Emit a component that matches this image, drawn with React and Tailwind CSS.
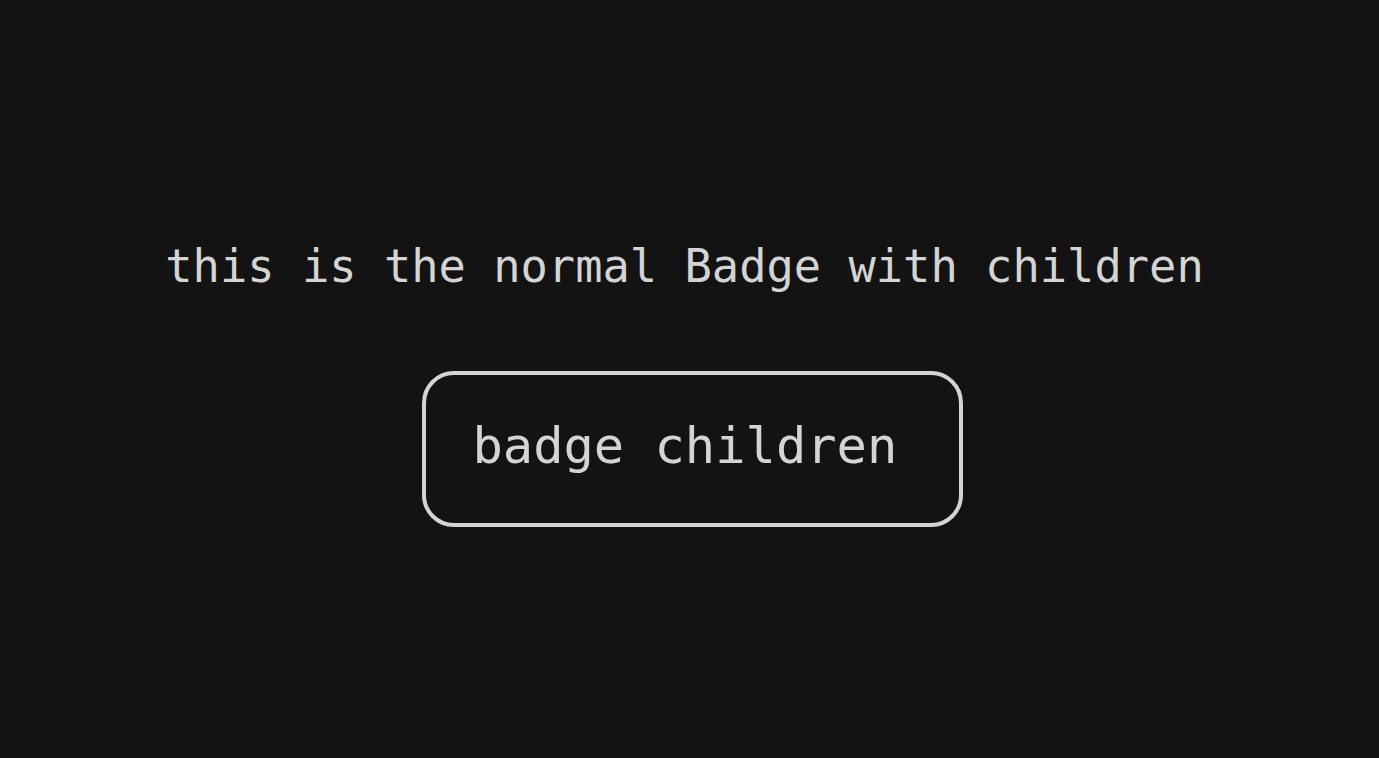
export default function App() {
  return (
    <div className="w-full h-screen bg-[#131313] text-[#d4d4d4] flex flex-col items-center" style={{ fontFamily: '"DejaVu Sans Mono", monospace' }}>
      <div className="mt-[237px] text-[45.4px] leading-[60px] whitespace-pre pr-[10px]">this is the normal Badge with children</div>
      <div className="mt-[74px] ml-[5px] w-[541px] h-[156px] border-[4px] border-[#d4d4d4] rounded-[32px] flex items-center pl-[47px]">
        <span className="text-[50.4px] leading-none pb-[6px]">badge children</span>
      </div>
    </div>
  );
}
